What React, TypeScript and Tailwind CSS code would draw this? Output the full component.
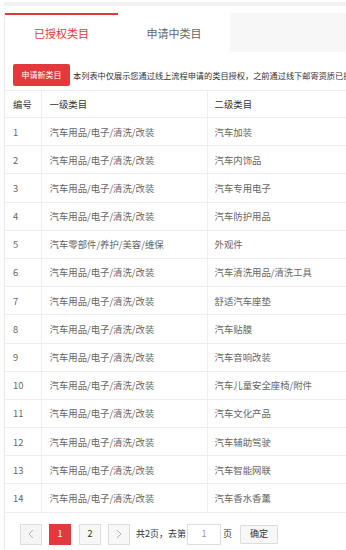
const rows: [string, string, string][] = [
  ["1", "汽车用品/电子/清洗/改装", "汽车加装"],
  ["2", "汽车用品/电子/清洗/改装", "汽车内饰品"],
  ["3", "汽车用品/电子/清洗/改装", "汽车专用电子"],
  ["4", "汽车用品/电子/清洗/改装", "汽车防护用品"],
  ["5", "汽车零部件/养护/美容/维保", "外观件"],
  ["6", "汽车用品/电子/清洗/改装", "汽车清洗用品/清洗工具"],
  ["7", "汽车用品/电子/清洗/改装", "舒适汽车座垫"],
  ["8", "汽车用品/电子/清洗/改装", "汽车贴膜"],
  ["9", "汽车用品/电子/清洗/改装", "汽车音响改装"],
  ["10", "汽车用品/电子/清洗/改装", "汽车儿童安全座椅/附件"],
  ["11", "汽车用品/电子/清洗/改装", "汽车文化产品"],
  ["12", "汽车用品/电子/清洗/改装", "汽车辅助驾驶"],
  ["13", "汽车用品/电子/清洗/改装", "汽车智能网联"],
  ["14", "汽车用品/电子/清洗/改装", "汽车香水香薰"],
];

const font = { fontFamily: '"Noto Sans CJK SC", "Liberation Sans", sans-serif' };

function Chevron({ dir }: { dir: "left" | "right" }) {
  return (
    <svg width="6" height="10" viewBox="0 0 6 10" fill="none">
      <path
        d={dir === "left" ? "M5 1 L1 5 L5 9" : "M1 1 L5 5 L1 9"}
        stroke="#b5b5b5"
        strokeWidth="1"
      />
    </svg>
  );
}

export default function App() {
  return (
    <div className="w-[346px] h-[550px] overflow-hidden bg-white" style={font}>
      <div className="mt-[2px] ml-[4px] h-[4px] bg-[#f1f1f1]" />
      <div className="mt-[7px] ml-[4px] border-l border-[#e8e8e8] h-[540px]">
        {/* tabs */}
        <div className="flex h-[39px] bg-[#f7f7f7]">
          <div className="w-[113px] bg-white border-t-2 border-[#e4393c] flex items-center justify-center text-[11px] text-[#e4393c]">
            已授权类目
          </div>
          <div className="w-[112px] bg-white border-t-2 border-white flex items-center justify-center text-[11px] text-[#666]">
            申请中类目
          </div>
        </div>

        {/* notice */}
        <div className="flex items-center gap-[3px] pl-[8px] pt-[8px] h-[38px] whitespace-nowrap overflow-hidden">
          <button className="h-[22px] w-[57px] bg-[#e4393c] text-white text-[8px] rounded-[2px] shrink-0">
            申请新类目
          </button>
          <span className="text-[8.2px] text-[#333] overflow-hidden">
            本列表中仅展示您通过线上流程申请的类目授权，之前通过线下邮寄资质已授权的类目
          </span>
        </div>

        {/* table */}
        <table className="w-[420px] border-collapse text-[9.4px] text-[#666]">
          <thead>
            <tr className="h-[27px] border-t border-b border-[#eeeeee]">
              <th className="w-[36px] pl-[8px] text-left font-normal text-[#333]">编号</th>
              <th className="w-[166px] pl-[8px] text-left font-normal text-[#333] border-l border-[#eeeeee]">一级类目</th>
              <th className="pl-[7px] text-left font-normal text-[#333] border-l border-[#eeeeee]">二级类目</th>
            </tr>
          </thead>
          <tbody>
            {rows.map((r) => (
              <tr key={r[0]} className="h-[28.2px] border-b border-[#eeeeee]">
                <td className="pl-[8px]">{r[0]}</td>
                <td className="pl-[8px] border-l border-[#eeeeee]">{r[1]}</td>
                <td className="pl-[7px] border-l border-[#eeeeee]">{r[2]}</td>
              </tr>
            ))}
          </tbody>
        </table>

        {/* pagination */}
        <div className="flex items-center pl-[15px] mt-[11px] text-[9px] text-[#333]">
          <div className="w-[22px] h-[21px] border border-[#dddddd] bg-[#f5f5f5] flex items-center justify-center">
            <Chevron dir="left" />
          </div>
          <div className="ml-[7px] w-[22px] h-[21px] bg-[#e4393c] text-white flex items-center justify-center">
            1
          </div>
          <div className="ml-[8px] w-[22px] h-[21px] border border-[#dddddd] bg-[#f7f7f7] flex items-center justify-center">
            2
          </div>
          <div className="ml-[7px] w-[22px] h-[21px] border border-[#dddddd] bg-[#f7f7f7] flex items-center justify-center">
            <Chevron dir="right" />
          </div>
          <span className="ml-[6px]">共2页，去第</span>
          <div className="ml-[1px] w-[34px] h-[21px] border border-[#dddddd] bg-white flex items-center justify-center text-[#999]">
            1
          </div>
          <span className="ml-[2px]">页</span>
          <div className="ml-[8px] w-[38px] h-[19px] border border-[#dddddd] bg-[#f7f7f7] rounded-[1px] flex items-center justify-center">
            确定
          </div>
        </div>
      </div>
    </div>
  );
}
